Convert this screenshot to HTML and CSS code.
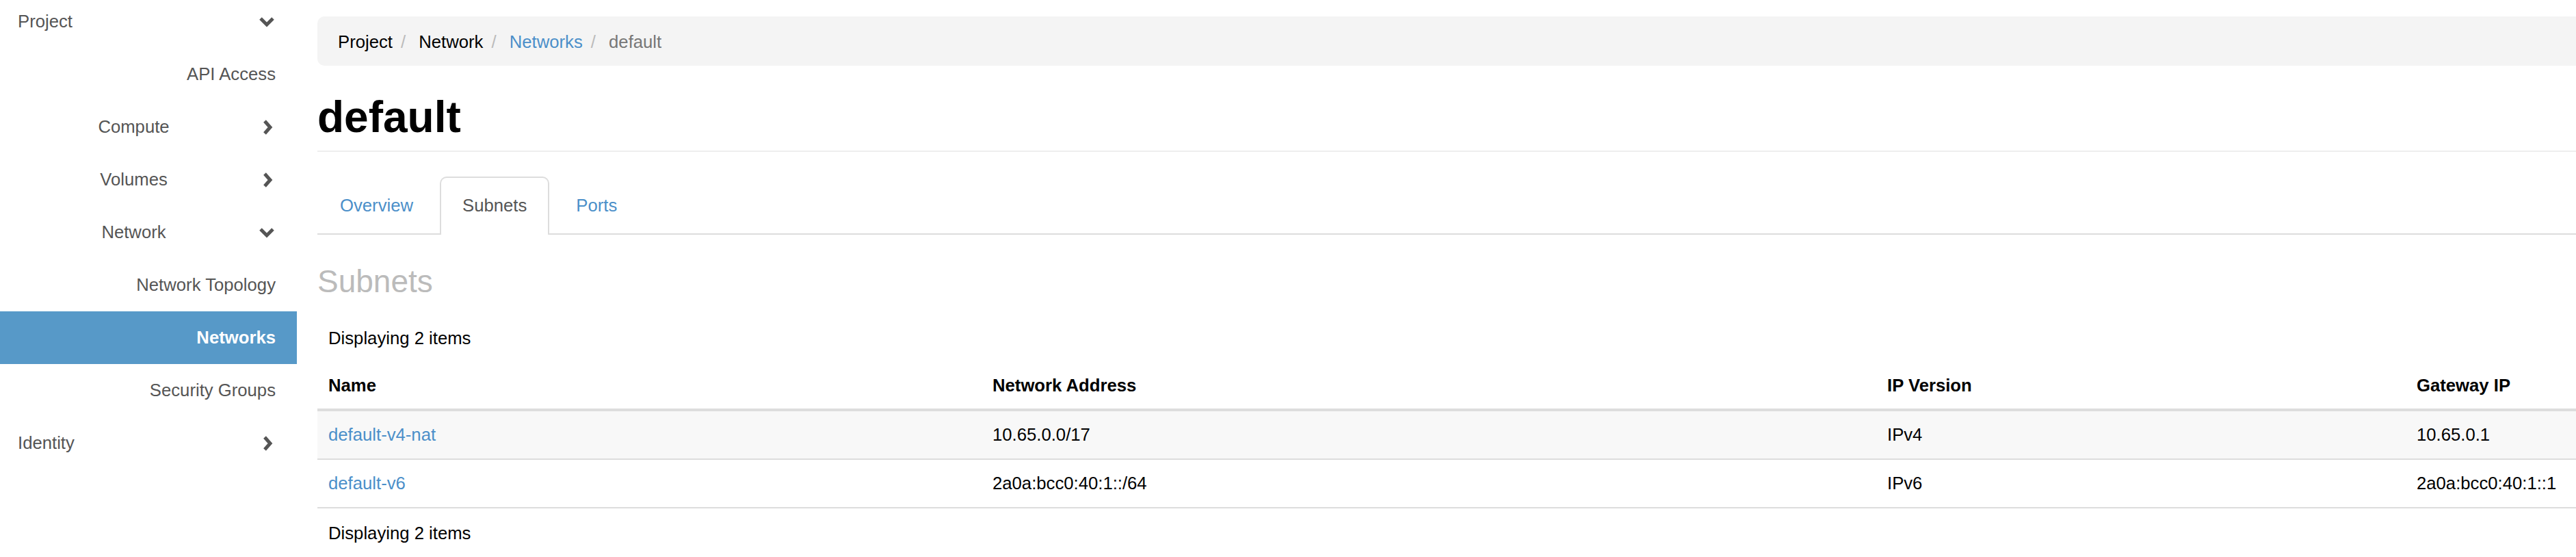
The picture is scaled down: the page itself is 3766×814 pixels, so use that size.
FILE: index.html
```html
<!DOCTYPE html>
<html lang="en">
<head>
<meta charset="utf-8">
<title>default - Networks</title>
<link rel="stylesheet" href="styles.css">
</head>
<body>
<div class="page">
  <nav class="sidebar">
    <ul class="nav">
      <li class="item lvl1"><span class="label">Project</span><span class="icon"><svg class="chev-down" viewBox="0 0 24 16" width="24" height="16"><polyline points="3,3 12,12 21,3"/></svg></span></li>
      <li class="item lvl3"><span class="label">API Access</span></li>
      <li class="item lvl2"><span class="label">Compute</span><span class="icon"><svg class="chev-right" viewBox="0 0 16 24" width="16" height="24"><polyline points="4,3 12,12 4,21"/></svg></span></li>
      <li class="item lvl2"><span class="label">Volumes</span><span class="icon"><svg class="chev-right" viewBox="0 0 16 24" width="16" height="24"><polyline points="4,3 12,12 4,21"/></svg></span></li>
      <li class="item lvl2"><span class="label">Network</span><span class="icon"><svg class="chev-down" viewBox="0 0 24 16" width="24" height="16"><polyline points="3,3 12,12 21,3"/></svg></span></li>
      <li class="item lvl3"><span class="label">Network Topology</span></li>
      <li class="item lvl3 active"><span class="label">Networks</span></li>
      <li class="item lvl3"><span class="label">Security Groups</span></li>
      <li class="item lvl1"><span class="label">Identity</span><span class="icon"><svg class="chev-right" viewBox="0 0 16 24" width="16" height="24"><polyline points="4,3 12,12 4,21"/></svg></span></li>
    </ul>
  </nav>

  <main class="content">
    <ol class="breadcrumb">
      <li>Project</li>
      <li>Network</li>
      <li><a href="#">Networks</a></li>
      <li class="current">default</li>
    </ol>

    <h1 class="page-title">default</h1>

    <ul class="tabs">
      <li><a href="#">Overview</a></li>
      <li class="active"><a href="#">Subnets</a></li>
      <li><a href="#">Ports</a></li>
    </ul>

    <h3 class="section-title">Subnets</h3>

    <table class="data-table">
      <colgroup>
        <col class="c-name">
        <col class="c-addr">
        <col class="c-ver">
        <col class="c-gw">
      </colgroup>
      <thead>
        <tr class="caption"><td colspan="4">Displaying 2 items</td></tr>
        <tr class="head">
          <th>Name</th>
          <th>Network Address</th>
          <th>IP Version</th>
          <th>Gateway IP</th>
        </tr>
      </thead>
      <tbody>
        <tr class="odd">
          <td><a href="#">default-v4-nat</a></td>
          <td>10.65.0.0/17</td>
          <td>IPv4</td>
          <td>10.65.0.1</td>
        </tr>
        <tr>
          <td><a href="#">default-v6</a></td>
          <td>2a0a:bcc0:40:1::/64</td>
          <td>IPv6</td>
          <td>2a0a:bcc0:40:1::1</td>
        </tr>
      </tbody>
      <tfoot>
        <tr class="caption foot"><td colspan="4">Displaying 2 items</td></tr>
      </tfoot>
    </table>
  </main>
</div>
</body>
</html>
```

FILE: styles.css
```css
html, body {
  margin: 0;
  padding: 0;
  background: #fff;
}

body {
  font-family: "Liberation Sans", Arial, Helvetica, sans-serif;
  font-size: 25.7px;
  color: #000;
  overflow: hidden;
  width: 3766px;
  height: 814px;
}

a {
  color: #4b8fc9;
  text-decoration: none;
}

.page {
  display: flex;
  align-items: flex-start;
}

/* ---------- Sidebar ---------- */
.sidebar {
  flex: none;
  width: 434px;
  margin-top: -7px;
}

.nav {
  list-style: none;
  margin: 0;
  padding: 0;
}

.item {
  display: flex;
  align-items: center;
  height: 77px;
  color: #555;
  box-sizing: border-box;
}

.item .icon {
  flex: none;
  width: 24px;
  display: flex;
  justify-content: center;
  align-items: center;
}

.item svg polyline {
  fill: none;
  stroke: #555;
  stroke-width: 5;
  stroke-linecap: butt;
  stroke-linejoin: miter;
}

.chev-right {
  margin-left: 2px;
}

.lvl1 {
  padding: 0 32px 0 26px;
}

.lvl1 .label {
  flex: 1;
}

.lvl2 {
  padding: 0 32px 0 13px;
}

.lvl2 .label {
  flex: 1;
  text-align: center;
}

.lvl3 {
  justify-content: flex-end;
  padding-right: 31px;
}

.lvl3.active {
  background: #5799c8;
  color: #fff;
  font-weight: bold;
}

/* ---------- Main content ---------- */
.content {
  flex: none;
  width: 3453px;
  padding: 24px 0 0 30px;
}

.breadcrumb {
  list-style: none;
  margin: 0;
  padding: 2px 0 0 30px;
  height: 70px;
  line-height: 70px;
  background: #f4f4f4;
  border-radius: 10px;
  display: flex;
}

.breadcrumb li {
  color: #000;
}

.breadcrumb li + li::before {
  content: "/\00a0";
  padding: 0 12px;
  color: #bbb;
}

.breadcrumb li.current {
  color: #777;
}

.page-title {
  margin: 40px 0 0;
  padding-bottom: 14px;
  font-size: 64px;
  line-height: 70px;
  font-weight: bold;
  border-bottom: 2px solid #eee;
}

.tabs {
  list-style: none;
  margin: 36px 0 0;
  padding: 0;
  display: flex;
  border-bottom: 2px solid #ddd;
}

.tabs li {
  margin-right: 6px;
  margin-bottom: -2px;
}

.tabs a {
  display: block;
  padding: 0 31px;
  height: 81px;
  line-height: 81px;
  border: 2px solid transparent;
  border-bottom: 0;
  border-radius: 10px 10px 0 0;
  color: #4b8fc9;
}

.tabs li.active a {
  border-color: #ddd;
  background: #fff;
  color: #555;
  height: 81px;
  padding-bottom: 2px;
}

.section-title {
  margin: 43px 0 0;
  font-size: 46px;
  line-height: 51px;
  font-weight: normal;
  color: #bbb;
}

.data-table {
  margin-top: 22px;
  width: 3453px;
  table-layout: fixed;
  border-collapse: separate;
  border-spacing: 0;
}

.c-name { width: 971px; }
.c-addr { width: 1308px; }
.c-ver  { width: 774px; }
.c-gw   { width: 400px; }

.data-table th,
.data-table td {
  padding: 0 16px;
  text-align: left;
  vertical-align: middle;
  white-space: nowrap;
}

.data-table .caption td {
  line-height: 70px;
}

.data-table .caption.foot td {
  line-height: 72px;
}

.data-table .head th {
  font-weight: bold;
  line-height: 68px;
  border-bottom: 4px solid #ddd;
}

.data-table tbody td {
  line-height: 69px;
  border-bottom: 2px solid #ddd;
}

.data-table tbody tr.odd td {
  background: #f8f8f8;
}
```
